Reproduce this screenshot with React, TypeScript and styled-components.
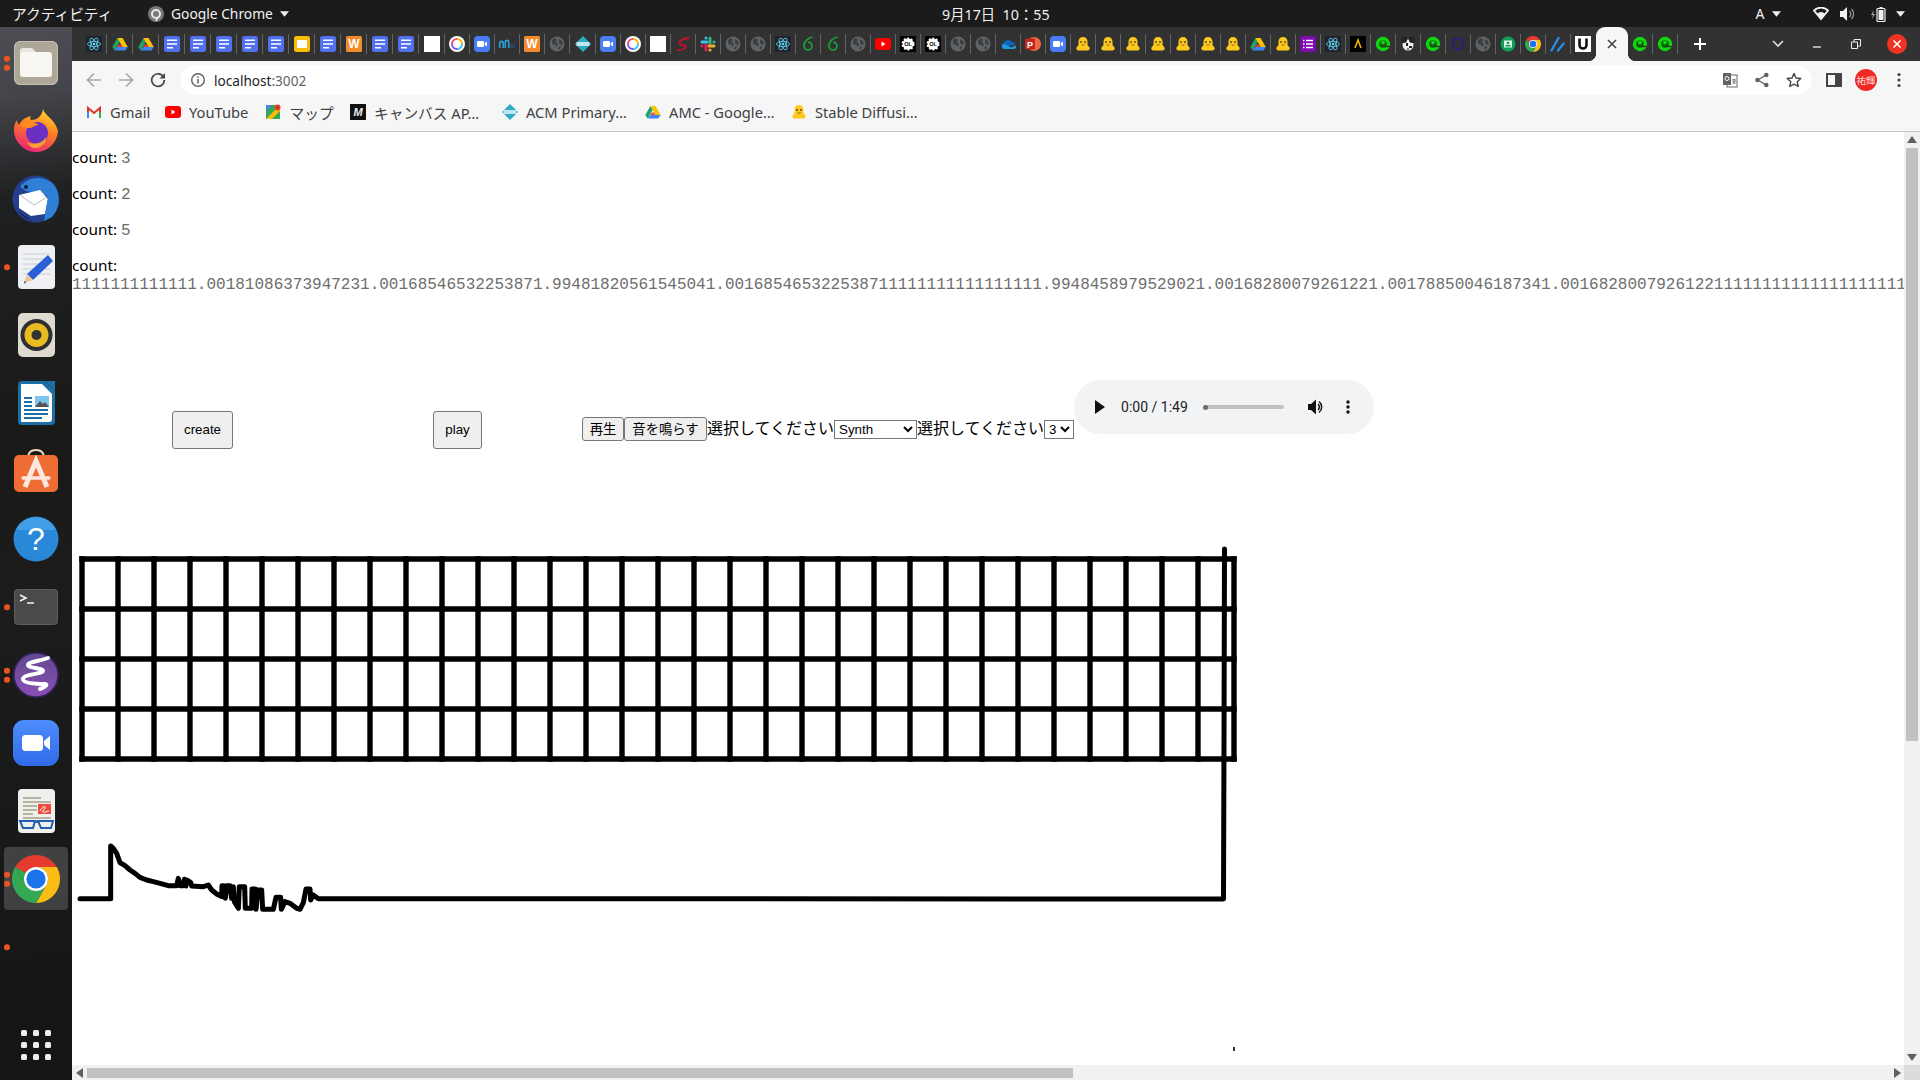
import React from "react";
import styled, { createGlobalStyle } from "styled-components";

const Global = createGlobalStyle`
  html, body { margin: 0; padding: 0; width: 1920px; height: 1080px; overflow: hidden; background: #1a1a1a; }
  #root { width: 1920px; height: 1080px; }
`;

const UI = `"Noto Sans", "Noto Sans CJK JP", sans-serif`;

const Screen = styled.div`
  width: 1920px; height: 1080px; display: flex; flex-direction: column; font-family: ${UI};
`;
const TopBar = styled.header`
  height: 27px; flex: none; background: #1b1b1b; color: #f1f1f1; display: flex; align-items: center; font-size: 14px;
`;
const Activities = styled.span`
  width: 148px; padding-left: 12px; box-sizing: border-box; font-size: 14.7px; letter-spacing: 0;
`;
const AppMenu = styled.div`
  width: 794px; display: flex; align-items: center; gap: 7px; box-sizing: border-box; font-size: 13.8px;
`;
const Clock = styled.time`
  width: 808px; font-size: 14.3px; white-space: pre;
`;
const Slot = styled.span<{ $w: number; $ml?: number }>`
  width: ${(p) => p.$w}px; margin-left: ${(p) => p.$ml ?? 0}px; flex: none; display: inline-flex; align-items: center; justify-content: center;
`;
const Body = styled.div`
  flex: 1; display: flex; min-height: 0;
`;
const Dock = styled.nav`
  width: 72px; flex: none; display: flex; flex-direction: column; box-sizing: border-box; padding-top: 2px; padding-bottom: 20px;
  background: linear-gradient(172deg, #4d4e54 0, #44454a 70px, #1f2021 170px, #191a18 420px, #1b1c1b 560px, #141515 1053px);
`;
const DockSlot = styled.div<{ $active?: boolean }>`
  height: 68px; flex: none; position: relative; display: flex; align-items: center; justify-content: center;
  &::before {
    content: ""; position: absolute; left: 4px; top: 2px; width: 64px; height: 63px; border-radius: 4px;
    background: ${(p) => (p.$active ? "rgba(255,255,255,.18)" : "transparent")};
  }
  svg { position: relative; }
`;
const DockDots = styled.div`
  position: absolute; left: 4px; top: 50%; transform: translateY(-50%); display: flex; flex-direction: column; gap: 3.5px;
`;
const Dot = styled.i`
  display: block; width: 5.5px; height: 5.5px; border-radius: 50%; background: #e95420;
`;
const AppGrid = styled.div`
  margin-top: auto; margin-left: 21px; display: grid; grid-template-columns: repeat(3, 6px); gap: 6px;
  i { display: block; width: 6px; height: 6px; border-radius: 1.5px; background: #eeeeee; }
`;
const Browser = styled.div`
  flex: 1; min-width: 0; display: flex; flex-direction: column;
`;
const TabStrip = styled.div`
  height: 34px; flex: none; background: #323233; display: flex; align-items: center; padding-left: 9px; box-sizing: border-box;
`;
const Tab = styled.div<{ $w: number; $sep: boolean }>`
  width: ${(p) => p.$w}px; height: 20px; flex: none; display: flex; align-items: center; justify-content: center; box-sizing: border-box;
  border-right: 1px solid ${(p) => (p.$sep ? "#626365" : "transparent")};
`;
const ActiveTab = styled.div`
  width: 32px; align-self: stretch; flex: none; background: #f6f6f6; border-radius: 9px 9px 0 0; position: relative;
  display: flex; align-items: center; justify-content: center;
  &::before, &::after { content: ""; position: absolute; bottom: 0; width: 8px; height: 8px; }
  &::before { left: -8px; background: radial-gradient(circle at 0 0, transparent 8px, #f6f6f6 8.5px); }
  &::after { right: -8px; background: radial-gradient(circle at 100% 0, transparent 8px, #f6f6f6 8.5px); }
`;
const Toolbar = styled.div`
  height: 36px; flex: none; box-sizing: border-box; background: #f6f6f6; padding: 4px 0 2px 6px; display: flex; align-items: center;
`;
const Omnibox = styled.div`
  width: 1632px; height: 30px; margin-left: 6px; flex: none; background: #fff; border-radius: 15px; display: flex; align-items: center;
  padding: 0 2px 0 10px; box-sizing: border-box;
`;
const Url = styled.span`
  margin-left: 8px; font-size: 13.6px; color: #202124; flex: 1;
  em { font-style: normal; color: #5f6368; }
`;
const Avatar = styled.span`
  width: 22px; height: 22px; border-radius: 50%; background: #f02a23; color: #ffd9d6; font-size: 9.5px; display: flex; align-items: center; justify-content: center; white-space: nowrap;
`;
const Bookmarks = styled.div`
  height: 35px; flex: none; box-sizing: border-box; background: #f6f6f6; border-bottom: 1px solid #c4c4c4; padding: 0 0 4px 14px; display: flex; align-items: center;
`;
const Bookmark = styled.div<{ $w: number }>`
  width: ${(p) => p.$w}px; flex: none; display: flex; align-items: center; gap: 8px; font-size: 14.7px; color: #3f4144; white-space: nowrap;
`;
const Viewport = styled.div`
  flex: 1; min-height: 0; display: flex; flex-direction: column; background: #fff;
`;
const ViewRow = styled.div`
  flex: 1; min-height: 0; display: flex;
`;
const Page = styled.main`
  flex: 1; min-width: 0; overflow: hidden; color: #000;
`;
const CountLine = styled.p`
  margin: 16px 0; height: 20px; font-size: 15.3px; line-height: 20px; white-space: nowrap; font-family: ${UI};
  &:first-child { margin-top: 15px; }
`;
const LastCount = styled(CountLine)`
  margin-bottom: 0;
`;
const Value = styled.span`
  font-family: "Liberation Mono", monospace; font-size: 16px; color: #6e6e6e;
`;
const LongValue = styled(Value)`
  display: block; white-space: nowrap; line-height: 20px;
`;
const Controls = styled.div`
  margin-top: 85px; height: 70px; white-space: nowrap; font-family: "Liberation Sans", "Noto Sans CJK JP", sans-serif; font-size: 16px;
`;
const Btn = styled.button<{ $w: number; $big?: boolean }>`
  width: ${(p) => p.$w}px;
  font-family: "Liberation Sans", "Noto Sans CJK JP", sans-serif; font-size: 13.333px; color: #000; background: #efefef;
  border: 1px solid #767676; border-radius: 3px; box-sizing: border-box;
  padding: ${(p) => (p.$big ? "10px 0" : "1px 0")}; margin: ${(p) => (p.$big ? "0 100px" : "0")};
  height: ${(p) => (p.$big ? "38px" : "24px")};
`;
const Picker = styled.select<{ $w: number }>`
  width: ${(p) => p.$w}px; font-family: "Liberation Sans", sans-serif; font-size: 13.333px; color: #000; background: #fff; box-sizing: border-box;
`;
const AudioPill = styled.div`
  display: inline-block; width: 300px; height: 54px; border-radius: 27px; background: #f1f3f4; overflow: hidden; box-sizing: border-box;
`;
const AudioInner = styled.div`
  height: 54px; display: flex; align-items: center; padding-left: 20px;
`;
const AudioTime = styled.span`
  margin-left: 15px; width: 83px; flex: none; font-family: Roboto, "Liberation Sans", sans-serif; font-size: 14px; color: #202124;
`;
const AudioTrack = styled.span`
  width: 80px; height: 4px; flex: none; border-radius: 2px; background: #c0c2c4; position: relative;
  &::before { content: ""; position: absolute; left: -1px; top: -0.5px; width: 5px; height: 5px; border-radius: 50%; background: #6b6d6f; }
`;
const Chart = styled.svg`
  display: block; margin-top: 90px;
`;
const VBar = styled.div`
  width: 16px; flex: none; background: #f1f1f1; display: flex; flex-direction: column; align-items: center; padding-top: 4px; box-sizing: border-box;
`;
const VThumb = styled.div`
  width: 12px; height: 593px; margin-top: 5px; background: #c1c1c1;
`;
const HBar = styled.div`
  height: 15px; flex: none; background: #f1f1f1; display: flex; align-items: center;
`;
const HThumb = styled.div`
  width: 986px; height: 10px; background: #c1c1c1;
`;
const Corner = styled.div`
  width: 16px; height: 15px; flex: none; background: #dcdcdc;
`;
const ArrowPush = styled.div`
  margin-top: auto; margin-bottom: 4px; display: flex;
`;
const HRightArrow = styled.div`
  margin-left: auto; margin-right: 3px; display: flex;
`;

/* ---------- favicons ---------- */
type Kind = "react"|"drive"|"docs"|"slides"|"word"|"white"|"ring"|"zoom"|"bars"|"globe"|"acm"|"reds"|"slack"|"leaf"|"yt"|"ol"|"cloud"|"ppt"|"hf"|"forms"|"lambda"|"egreen"|"mouse"|"gear"|"room"|"chrome"|"slash"|"u"|"gmail"|"maps"|"miro";

const ChromeMark = ({ s }: { s: number }) => (
  <svg width={s} height={s} viewBox="4 4 40 40">
    <path fill="#e53c2f" d="M6.68 14A20 20 0 0 1 41.32 14H24A10 10 0 0 0 15.34 19Z" />
    <path fill="#fbbc16" d="M24 14H41.32A20 20 0 0 1 24 44L32.66 29A10 10 0 0 0 24 14Z" />
    <path fill="#34a853" d="M6.68 14A20 20 0 0 0 24 44L32.66 29A10 10 0 0 1 15.34 29 Z" />
    <path fill="#34a853" d="M6.68 14L15.34 19 15.34 29Z" />
    <circle cx="24" cy="24" r="10" fill="#fff" />
    <circle cx="24" cy="24" r="8" fill="#1a73e8" />
  </svg>
);

const Fav = ({ k }: { k: Kind }) => {
  const p = { width: 16, height: 16, viewBox: "0 0 16 16" };
  switch (k) {
    case "react":
      return (<svg {...p}><rect width="16" height="16" fill="#20242a" /><g fill="none" stroke="#61dafb" strokeWidth=".8"><ellipse cx="8" cy="8" rx="6.5" ry="2.6" /><ellipse cx="8" cy="8" rx="6.5" ry="2.6" transform="rotate(60 8 8)" /><ellipse cx="8" cy="8" rx="6.5" ry="2.6" transform="rotate(120 8 8)" /></g><circle cx="8" cy="8" r="1.3" fill="#61dafb" /></svg>);
    case "drive":
      return (<svg {...p}><path fill="#1fa463" d="M5.4 2 .3 11l2.4 3.5L8 5.4z" /><path fill="#ffc107" d="M5.4 2h5.2l5.1 9h-5.2z" /><path fill="#4285f4" d="M2.7 14.5h10.6l2.4-3.5H5.2z" /><path fill="#ea4335" d="M5.2 11h5.3l-1.4-2.5H6.6z" opacity=".9" /></svg>);
    case "docs":
      return (<svg {...p}><rect width="16" height="16" rx="2.5" fill="#5170ee" /><path stroke="#fff" strokeWidth="1.5" d="M3 4.2h10M3 8h10M3 11.8h6" /></svg>);
    case "slides":
      return (<svg {...p}><rect width="16" height="16" rx="2.5" fill="#fbbc04" /><rect x="3" y="4" width="10" height="8" fill="#fff" /></svg>);
    case "word":
      return (<svg {...p}><rect width="16" height="16" rx="1.5" fill="#f48b2c" /><text x="8" y="12.3" textAnchor="middle" fontFamily="Liberation Sans" fontWeight="700" fontSize="12" fill="#fff">W</text></svg>);
    case "white":
      return (<svg {...p}><rect width="16" height="16" fill="#fff" /></svg>);
    case "ring":
      return (<svg {...p}><circle cx="8" cy="8" r="8" fill="#fff" /><g fill="none" strokeWidth="2"><path stroke="#f7b500" d="M8 3a5 5 0 0 1 5 5" /><path stroke="#35c1f1" d="M13 8a5 5 0 0 1-5 5" /><path stroke="#8a4de8" d="M8 13a5 5 0 0 1-5-5" /><path stroke="#e84d8a" d="M3 8a5 5 0 0 1 5-5" /></g></svg>);
    case "zoom":
      return (<svg {...p}><rect width="16" height="16" rx="4" fill="#4a7cf6" /><rect x="3" y="5" width="7" height="6" rx="1.2" fill="#fff" /><path fill="#fff" d="M10.6 7.3 13 5.5v5l-2.4-1.8z" /></svg>);
    case "bars":
      return (<svg {...p}><path fill="#2b9fd8" d="M0 12V7a2.5 2.5 0 0 1 5 0v5H3.5V7.5a1 1 0 0 0-2 0V12z" /><path fill="#2b9fd8" d="M5.5 12V6a2.5 2.5 0 0 1 5 0v6H9V6.5a1 1 0 0 0-2 0V12z" /><path fill="#24475a" d="M11 12V8h5v4z" /></svg>);
    case "globe":
      return (<svg {...p}><circle cx="8" cy="8" r="7.5" fill="#5f6368" /><path fill="#3c3e42" d="M3 4l3-2 2 2-1 2 2 2-1 3-2-2-3-1zM10 3l3 2 1 3-2 1-2-2zM9 12l2-2 1 1-1 3z" /></svg>);
    case "acm":
      return (<svg {...p}><path fill="#2fa9c4" d="M8 0l8 8-8 8-8-8z" /><rect x="1.5" y="6" width="13" height="4" fill="#bfe6ee" /></svg>);
    case "reds":
      return (<svg {...p}><path fill="none" stroke="#c8102e" strokeWidth="1.8" d="M14 2C9 2 3 5 5 8s7 0 6 2.5S6 14 2 14" /></svg>);
    case "slack":
      return (<svg {...p}><g strokeWidth="3" strokeLinecap="round"><path stroke="#36c5f0" d="M2 6h5M6 2v.1" /><path stroke="#2eb67d" d="M10 2v5M14 6h-.1" /><path stroke="#ecb22e" d="M14 10H9M10 14v-.1" /><path stroke="#e01e5a" d="M6 14V9M2 10h.1" /></g></svg>);
    case "leaf":
      return (<svg {...p}><path fill="none" stroke="#13a538" strokeWidth="1.7" d="M12.5 1C8 2 4 5.5 4 10a4 4 0 0 0 8 0c0-2.500-2-4-4-3.500" /></svg>);
    case "yt":
      return (<svg {...p}><rect y="2" width="16" height="12" rx="3" fill="#ff0000" /><path fill="#fff" d="M6.500 5.500 10.500 8l-4 2.500z" /></svg>);
    case "ol":
      return (<svg {...p}><rect width="16" height="16" fill="#000" /><circle cx="8" cy="8" r="5.500" fill="#fff" stroke="#fff" strokeWidth="2" strokeDasharray="2 1.500" /><text x="8" y="10" textAnchor="middle" fontSize="5.500" fontWeight="700" fontFamily="Liberation Sans" fill="#000">OL</text></svg>);
    case "cloud":
      return (<svg {...p}><path fill="#0a66c2" d="M6.500 4.500a4 4 0 0 1 5 1.500 3 3 0 0 1 3.500 3L8 10 3.800 7.500a3 3 0 0 1 2.700-3z" /><path fill="#1e9be8" d="M3.800 7.500 11 11.500l5-2a2.500 2.500 0 0 1-2.500 3.500H3.500a3 3 0 0 1 .3-5.500z" /></svg>);
    case "ppt":
      return (<svg {...p}><circle cx="9" cy="8" r="7" fill="#ea6a4a" /><rect y="2.500" width="10" height="11" rx="1" fill="#c4261d" /><text x="5" y="11.500" textAnchor="middle" fontSize="9" fontWeight="700" fontFamily="Liberation Sans" fill="#fff">P</text></svg>);
    case "hf":
      return (<svg {...p}><path fill="#ffc81e" d="M8 1c3 0 4.500 2 4.500 5v3l2 2.500c.8 1.500-.5 3-2 3H3.500c-1.500 0-2.800-1.500-2-3l2-2.500V6c0-3 1.500-5 4.500-5z" /><circle cx="6" cy="6" r=".9" fill="#4a3b12" /><circle cx="10" cy="6" r=".9" fill="#4a3b12" /><path d="M6.500 8.500c1 1 2 1 3 0" stroke="#4a3b12" strokeWidth=".7" fill="none" /></svg>);
    case "forms":
      return (<svg {...p}><rect width="16" height="16" fill="#7a0dac" /><path stroke="#fff" strokeWidth="1.500" d="M3 4.500h1.500M6 4.500h7M3 8h1.500M6 8h7M3 11.500h1.500M6 11.500h7" /></svg>);
    case "lambda":
      return (<svg {...p}><rect width="16" height="16" fill="#000" /><path fill="none" stroke="#f0b400" strokeWidth="1.600" d="M5 12 8 4l3 8" /></svg>);
    case "egreen":
      return (<svg {...p}><circle cx="8" cy="8" r="5.500" fill="#0c5c0c" stroke="#0fd60f" strokeWidth="3.400" /><circle cx="8" cy="6.500" r="2" fill="#0fd60f" /><path stroke="#323233" strokeWidth="1.400" fill="none" d="M9.500 10.500h6.500" /></svg>);
    case "mouse":
      return (<svg {...p}><circle cx="8" cy="9" r="5.500" fill="#f0f0f0" /><circle cx="4" cy="4" r="3" fill="#222" /><circle cx="12" cy="4" r="3" fill="#222" /><path fill="#222" d="M6 7h2v3H6zM9 10h3v2H9z" /><circle cx="8" cy="13" r="1" fill="#a33" /></svg>);
    case "gear":
      return (<svg {...p}><circle cx="8" cy="8" r="5.500" fill="none" stroke="#2a1a82" strokeWidth="2.500" strokeDasharray="3 1" /></svg>);
    case "room":
      return (<svg {...p}><circle cx="8" cy="8" r="7.500" fill="#0f9d58" /><rect x="4" y="4.500" width="8" height="7" fill="#dff3e8" /><circle cx="8" cy="7" r="1.300" fill="#0f9d58" /><rect x="5.500" y="9" width="5" height="1.500" fill="#0f9d58" /></svg>);
    case "chrome":
      return <ChromeMark s={16} />;
    case "slash":
      return (<svg {...p}><path stroke="#2a8ae0" strokeWidth="2.400" strokeLinecap="round" d="M1.500 14.500 8.500 2M8 14.500l5.500-7" /></svg>);
    case "u":
      return (<svg {...p}><rect width="16" height="16" fill="#fff" /><path fill="none" stroke="#111" strokeWidth="2.600" d="M4.500 2.500V9a3.500 3.500 0 0 0 7 0V2.500" /></svg>);
    case "gmail":
      return (<svg {...p}><path fill="none" stroke="#e0352b" strokeWidth="2" d="M2 14V4l6 5 6-5v10" /><path stroke="#4285f4" strokeWidth="2" d="M2 8v6" /><path stroke="#34a853" strokeWidth="2" d="M14 8v6" /></svg>);
    case "maps":
      return (<svg {...p}><rect y="1" width="14" height="14" fill="#34a853" /><path fill="#fbbc04" d="M0 15 14 1v6L6 15z" /><path fill="#4285f4" d="M0 1h6L0 7z" /><circle cx="11.500" cy="3.500" r="3" fill="#ea4335" /><circle cx="11.500" cy="3.500" r="1" fill="#8c1a13" /></svg>);
    case "miro":
      return (<svg {...p}><rect width="16" height="16" fill="#111" /><text x="8" y="12" textAnchor="middle" fontSize="11" fontStyle="italic" fontWeight="700" fontFamily="Liberation Sans" fill="#eee">M</text></svg>);
  }
};

const tabKinds: Kind[] = ["react","drive","drive","docs","docs","docs","docs","docs","slides","docs","word","docs","docs","white","ring","zoom","bars","word","globe","acm","zoom","ring","white","reds","slack","globe","globe","react","leaf","leaf","globe","yt","ol","ol","globe","globe","cloud","ppt","zoom","hf","hf","hf","hf","hf","hf","hf","drive","hf","forms","react","lambda","egreen","mouse","egreen","gear","globe","room","chrome","slash","u"];

const tabWidth = (i: number) => (i < 14 ? 26 : i < 23 ? 25.1 : 25);

/* ---------- dock icons ---------- */
const DFiles = () => (
  <svg width="44" height="44" viewBox="0 0 44 44"><rect width="44" height="44" rx="6" fill="#aca797" /><rect x=".5" y=".5" width="43" height="43" rx="6" fill="none" stroke="#c5c0b2" /><path fill="#e9e6df" d="M6 10a3 3 0 0 1 3-3h9l4 4v8H6z" /><rect x="6" y="11" width="32" height="25" rx="3" fill="#f8f7f4" /></svg>
);
const DFirefox = () => (
  <svg width="46" height="46" viewBox="0 0 46 46"><defs><linearGradient id="ff" x1="0.700" y1="0" x2="0.300" y2="1"><stop offset="0" stopColor="#ffd52f" /><stop offset=".45" stopColor="#ff7a1f" /><stop offset="1" stopColor="#e8227c" /></linearGradient></defs><path fill="url(#ff)" d="M30 1c1 6 12 10 15 22a22 22 0 1 1-44-2c0-4 2-8 3-9 0 2 1 4 2 5 2-5 7-8 12-9-1 2-1 3 0 4 5 0 11-3 12-11z" /><circle cx="24" cy="25" r="11" fill="#6b2fc4" /><path fill="#ff8a1f" d="M7 17c6-5 13-4 19 0-5 0-6 3-9 3-4 0-7 0-10-3z" /><path fill="#ffb427" d="M14 34c6 3 15 2 19-5 1 5-4 11-11 11-3 0-6-2-8-6z" opacity=".8" /></svg>
);
const DThunder = () => (
  <svg width="48" height="48" viewBox="0 0 48 48"><circle cx="24" cy="24" r="23.500" fill="#23408f" /><path fill="#2f7fd6" d="M8 12C14 2 32-1 42 10c6 8 7 22-2 32 1-8-1-16-6-22L14 16z" /><path fill="#fff" d="M7 20 28 15l8 9-3 15-14 2L7 33z" /><path fill="none" stroke="#b8b8c4" d="M8 20l14 10 13-8" /><path fill="#1b1b4a" d="M2 28c3 8 8 14 18 18L6 36z" /><path fill="#2f7fd6" d="M36 22l8 6-4 14-8 4z" /><circle cx="14" cy="12" r="2" fill="#123" /></svg>
);
const DGedit = () => (
  <svg width="37" height="44" viewBox="0 0 37 44"><rect width="37" height="44" rx="4" fill="#eef0f3" /><path stroke="#c9ccd1" strokeWidth="1" d="M5 9h27M5 14h27M5 19h27M5 24h27M5 29h27" /><path fill="#2a5fd8" d="M30 10l5 6-20 19-6-6z" /><path fill="#e8c79a" d="M9 29l6 6-9 3z" /><path fill="#333" d="M6 37l2-1-1 3z" /></svg>
);
const DRhythm = () => (
  <svg width="37" height="44" viewBox="0 0 37 44"><rect width="37" height="44" rx="5" fill="#dedad0" /><circle cx="18.500" cy="22" r="16" fill="#2f2f33" /><circle cx="18.500" cy="22" r="12" fill="#e8bb22" /><circle cx="18.500" cy="22" r="5" fill="#333" /></svg>
);
const DWriter = () => (
  <svg width="37" height="44" viewBox="0 0 37 44"><path fill="#1c6fa5" d="M4 0h23l10 10v30a4 4 0 0 1-4 4H4a4 4 0 0 1-4-4V4a4 4 0 0 1 4-4z" /><path fill="#fff" d="M4 3h20l10 10v25a3 3 0 0 1-3 3H4a1 1 0 0 1-1-1V4a1 1 0 0 1 1-1z" /><path fill="#1c6fa5" d="M27 0h10v10z" /><path stroke="#1c6fa5" strokeWidth="2" d="M6 17h8M6 21h8M6 25h8M6 29h24M6 33h24M6 37h18" /><rect x="17" y="15" width="14" height="11" fill="#7fc4ea" /><path fill="#555" d="M17 26l5-6 3 3 2-2 4 5z" /></svg>
);
const DStore = () => (
  <svg width="46" height="46" viewBox="0 0 46 46"><path fill="none" stroke="#f1d9b8" strokeWidth="2" d="M15 10c0-5 3-8 8-8s8 3 8 8" /><rect x="1" y="7" width="44" height="37" rx="5" fill="#ee6d35" /><path fill="none" stroke="#fde8de" strokeWidth="5" d="M12 39 23 13l11 26" /><path stroke="#fde8de" strokeWidth="3.500" strokeLinecap="round" d="M10 30h26" /></svg>
);
const DHelp = () => (
  <svg width="46" height="46" viewBox="0 0 46 46"><circle cx="23" cy="23" r="22.500" fill="#2a88d8" /><path fill="#4ba8ea" d="M3 14a22 22 0 0 1 40 0z" opacity=".7" /><text x="23" y="34" textAnchor="middle" fontSize="32" fontFamily="Liberation Sans" fill="#fff">?</text></svg>
);
const DTerminal = () => (
  <svg width="44" height="36" viewBox="0 0 44 36"><rect width="44" height="36" rx="4" fill="#4a4a4a" /><rect x=".5" y=".5" width="43" height="35" rx="4" fill="none" stroke="#5e5e5e" /><path fill="none" stroke="#f2f2f2" strokeWidth="1.600" d="M6 6l6 3-6 3M13 14h7" /></svg>
);
const DEmacs = () => (
  <svg width="46" height="46" viewBox="0 0 46 46"><defs><linearGradient id="em" x1="0" y1="0" x2="0" y2="1"><stop offset="0" stopColor="#5e4a8f" /><stop offset="1" stopColor="#8c4fb4" /></linearGradient></defs><circle cx="23" cy="23" r="22" fill="url(#em)" stroke="#3a2466" strokeWidth="1.500" /><path fill="none" stroke="#fff" strokeWidth="4" strokeLinecap="round" d="M35 6C27 9 15 10 15 13s15 3 15 6-20 3-20 8 16 5 22 5c3 0 1 3-5 5" /></svg>
);
const DZoom = () => (
  <svg width="46" height="46" viewBox="0 0 46 46"><defs><linearGradient id="zm" x1="0" y1="0" x2="0" y2="1"><stop offset="0" stopColor="#4d8dfb" /><stop offset="1" stopColor="#2f6be8" /></linearGradient></defs><rect width="46" height="46" rx="11" fill="url(#zm)" /><rect x="9" y="15" width="21" height="16" rx="3.500" fill="#fff" /><path fill="#fff" d="M31 21l6-5v14l-6-5z" /></svg>
);
const DEvince = () => (
  <svg width="37" height="44" viewBox="0 0 37 44"><rect width="37" height="44" rx="4" fill="#efefec" /><path stroke="#b9b3a2" strokeWidth="2" d="M5 9h18M5 13h28M5 17h14M5 21h14M5 25h10M5 29h28" /><rect x="20" y="15" width="13" height="10" fill="#ee4b3e" /><path d="M22 22c2-4 6-6 5-3s-4 3-2 4 4-1 6-1" stroke="#fff" fill="none" strokeWidth="1" /><g fill="none" stroke="#1f5fb4" strokeWidth="2"><path d="M2 32h15l-2 7H5zM20 32h15l-2 7H23z" /><path d="M17 33h3" /></g></svg>
);

/* ---------- generic icons ---------- */
const Caret = ({ c = "#eee", w = 9 }: { c?: string; w?: number }) => (
  <svg width={w} height="6" viewBox="0 0 10 6"><path fill={c} d="M0 0h10L5 6z" /></svg>
);

/* ---------- waveform ---------- */
const wave: [number, number][] = [[30,236],[122,236],[122,78],[130,85],[140,100],[150,128],[165,137],[180,150],[195,160],[210,172],[230,180],[250,185],[270,190],[295,197],[320,197],[325,175],[330,197],[340,197],[343,178],[348,198],[350,180],[362,187],[365,198],[400,200],[415,195],[425,210],[440,222],[455,230],[456,197],[462,197],[466,235],[470,197],[480,197],[485,235],[490,200],[493,245],[505,265],[508,200],[524,200],[526,265],[545,265],[546,207],[556,207],[558,268],[564,210],[575,210],[578,268],[610,268],[618,232],[632,232],[634,268],[645,245],[660,250],[680,265],[690,268],[700,248],[708,207],[720,207],[722,240],[730,225],[745,236],[900,236]];
const OX = 72, OY = 540;
const mapped = wave.map(([x, y]) => `${70 + x / 3 - OX},${820 + y / 3 - OY}`).join(" ");
const gridX = Array.from({ length: 33 }, (_, i) => 10 + 36 * i);
const gridY = [19, 69, 119, 169, 219];

const LONG = "1111111111111.00181086373947231.00168546532253871.99481820561545041.001685465322538711111111111111111.9948458979529021.00168280079261221.00178850046187341.00168280079261221111111111111111111111111111111111";

const dockItems: { el?: React.ReactNode; dots: number; active?: boolean }[] = [
  { el: <DFiles />, dots: 2 },
  { el: <DFirefox />, dots: 0 },
  { el: <DThunder />, dots: 0 },
  { el: <DGedit />, dots: 1 },
  { el: <DRhythm />, dots: 0 },
  { el: <DWriter />, dots: 0 },
  { el: <DStore />, dots: 0 },
  { el: <DHelp />, dots: 0 },
  { el: <DTerminal />, dots: 1 },
  { el: <DEmacs />, dots: 2 },
  { el: <DZoom />, dots: 0 },
  { el: <DEvince />, dots: 0 },
  { el: <ChromeMark s={48} />, dots: 2, active: true },
  { dots: 1 },
];

const marks: { k: Kind; t: string; w: number }[] = [
  { k: "gmail", t: "Gmail", w: 79 },
  { k: "yt", t: "YouTube", w: 100.5 },
  { k: "maps", t: "マップ", w: 84.5 },
  { k: "miro", t: "キャンバス AP…", w: 152 },
  { k: "acm", t: "ACM Primary…", w: 143 },
  { k: "drive", t: "AMC - Google…", w: 146 },
  { k: "hf", t: "Stable Diffusi…", w: 140 },
];

export default function App() {
  return (
    <Screen>
      <Global />
      <TopBar>
        <Activities>アクティビティ</Activities>
        <AppMenu>
          <svg width="16" height="16" viewBox="0 0 16 16"><circle cx="8" cy="8" r="8" fill="#77787a" /><circle cx="8" cy="8" r="4" fill="none" stroke="#e8e8e8" strokeWidth="2" /><path stroke="#e8e8e8" strokeWidth="1.500" d="M10 11l-2 4" /></svg>
          <span>Google Chrome</span>
          <Caret />
        </AppMenu>
        <Clock>9月17日  10：55</Clock>
        <Slot $w={20} $ml={0}>A</Slot>
        <Slot $w={12}><Caret /></Slot>
        <Slot $w={20} $ml={29}><svg width="16" height="14" viewBox="0 0 16 14"><path fill="none" stroke="#f2f2f2" strokeWidth="1.800" d="M1 3.500a10 10 0 0 1 14 0L8 12z" /><path fill="#f2f2f2" d="M4 6.500a6 6 0 0 1 8 0L8 12z" /></svg></Slot>
        <Slot $w={20} $ml={7}><svg width="16" height="14" viewBox="0 0 16 14"><path fill="#f2f2f2" d="M0 4h3l4-4v14l-4-4H0z" /><path fill="none" stroke="#999" strokeWidth="1.200" d="M9.500 4a4 4 0 0 1 0 6M11.500 2a7 7 0 0 1 0 10" /></svg></Slot>
        <Slot $w={20} $ml={11}><svg width="16" height="16" viewBox="0 0 16 16"><path fill="#aaa" d="M3 4 0 9h2l-1 4 3-5H2z" /><rect x="6" y="2.500" width="8" height="13" rx="1" fill="none" stroke="#f2f2f2" strokeWidth="1.200" /><rect x="7.500" y="4" width="5" height="10" fill="#f2f2f2" /><rect x="8.500" y="1" width="3" height="1.500" fill="#f2f2f2" /></svg></Slot>
        <Slot $w={12} $ml={5}><Caret /></Slot>
      </TopBar>
      <Body>
        <Dock>
          {dockItems.map((d, i) => (
            <DockSlot key={i} $active={d.active}>
              {d.el}
              {d.dots > 0 && (
                <DockDots>
                  {Array.from({ length: d.dots }, (_, j) => <Dot key={j} />)}
                </DockDots>
              )}
            </DockSlot>
          ))}
          <AppGrid>{Array.from({ length: 9 }, (_, i) => <i key={i} />)}</AppGrid>
        </Dock>
        <Browser>
          <TabStrip>
            {tabKinds.map((k, i) => (
              <Tab key={i} $w={tabWidth(i)} $sep={i !== tabKinds.length - 1}><Fav k={k} /></Tab>
            ))}
            <ActiveTab>
              <svg width="12" height="12" viewBox="0 0 12 12"><path stroke="#444" strokeWidth="1.600" d="M2 2l8 8M10 2l-8 8" /></svg>
            </ActiveTab>
            <Tab $w={25} $sep><Fav k="egreen" /></Tab>
            <Tab $w={25} $sep><Fav k="egreen" /></Tab>
            <Slot $w={44}><svg width="14" height="14" viewBox="0 0 14 14"><path stroke="#fff" strokeWidth="2" d="M7 1v12M1 7h12" /></svg></Slot>
            <Slot $w={24} $ml={44}><svg width="12" height="8" viewBox="0 0 12 8"><path fill="none" stroke="#ddd" strokeWidth="1.600" d="M1 1l5 5 5-5" /></svg></Slot>
            <Slot $w={40} $ml={7}><svg width="10" height="10" viewBox="0 0 10 10"><path stroke="#eee" strokeWidth="1.300" d="M1 8h8" /></svg></Slot>
            <Slot $w={39}><svg width="10" height="10" viewBox="0 0 10 10"><path fill="none" stroke="#eee" d="M.5 3h6v6.500h-6zM3 3V.5h6.500v6.500H7" /></svg></Slot>
            <Slot $w={42}><svg width="20" height="20" viewBox="0 0 20 20"><circle cx="10" cy="10" r="10" fill="#ee3424" /><path stroke="#fff" strokeWidth="1.600" d="M6.500 6.500l7 7M13.500 6.500l-7 7" /></svg></Slot>
          </TabStrip>
          <Toolbar>
            <Slot $w={32}><svg width="16" height="16" viewBox="0 0 16 16"><path fill="none" stroke="#a8a8a8" strokeWidth="1.700" d="M15 8H2M8 1.500 1.500 8 8 14.500" /></svg></Slot>
            <Slot $w={32}><svg width="16" height="16" viewBox="0 0 16 16"><path fill="none" stroke="#a8a8a8" strokeWidth="1.700" d="M1 8h13M8 1.500 14.500 8 8 14.500" /></svg></Slot>
            <Slot $w={32}><svg width="16" height="16" viewBox="0 0 16 16"><path fill="none" stroke="#444" strokeWidth="1.700" d="M13.500 5A6.300 6.300 0 1 0 14.300 8" /><path fill="#444" d="M15 1v5.500H9.500z" /></svg></Slot>
            <Omnibox>
              <svg width="16" height="16" viewBox="0 0 16 16"><circle cx="8" cy="8" r="6.300" fill="none" stroke="#5f6368" strokeWidth="1.400" /><path stroke="#5f6368" strokeWidth="1.500" d="M8 7v4.500M8 4.300v1.500" /></svg>
              <Url>localhost<em>:3002</em></Url>
              <Slot $w={32}><svg width="16" height="16" viewBox="0 0 16 16"><rect x="5" y="3" width="10" height="12" fill="#fff" stroke="#666" /><path fill="#5f6368" d="M1 1h8v12H1z" /><circle cx="5" cy="6.500" r="2" fill="none" stroke="#fff" /><path stroke="#666" fill="none" d="M10 8h4M12 7v1M10.500 12l3-3M11 9l2.500 3" /></svg></Slot>
              <Slot $w={32}><svg width="16" height="16" viewBox="0 0 16 16"><path fill="none" stroke="#5f6368" strokeWidth="1.400" d="M12 3 4 8l8 5" /><circle cx="12.300" cy="3" r="2.300" fill="#5f6368" /><circle cx="3.500" cy="8" r="2.300" fill="#5f6368" /><circle cx="12.300" cy="13" r="2.300" fill="#5f6368" /></svg></Slot>
              <Slot $w={32}><svg width="16" height="16" viewBox="0 0 16 16"><path fill="none" stroke="#444" strokeWidth="1.400" strokeLinejoin="round" d="M8 1.500l2 4.500 4.800.5-3.600 3.200 1 4.800L8 12.100l-4.200 2.400 1-4.800L1.200 6.500 6 6z" /></svg></Slot>
            </Omnibox>
            <Slot $w={32} $ml={6}><svg width="16" height="16" viewBox="0 0 16 16"><rect x="1" y="2" width="14" height="12" fill="none" stroke="#444" strokeWidth="2" /><rect x="9" y="2" width="6" height="12" fill="#444" /></svg></Slot>
            <Slot $w={32}><Avatar>祐輝</Avatar></Slot>
            <Slot $w={34}><svg width="4" height="16" viewBox="0 0 4 16"><circle cx="2" cy="2.500" r="1.600" fill="#444" /><circle cx="2" cy="8" r="1.600" fill="#444" /><circle cx="2" cy="13.500" r="1.600" fill="#444" /></svg></Slot>
          </Toolbar>
          <Bookmarks>
            {marks.map((m) => (
              <Bookmark key={m.t} $w={m.w}><Fav k={m.k} /><span>{m.t}</span></Bookmark>
            ))}
          </Bookmarks>
          <Viewport>
            <ViewRow>
              <Page>
                <CountLine>count: <Value>3</Value></CountLine>
                <CountLine>count: <Value>2</Value></CountLine>
                <CountLine>count: <Value>5</Value></CountLine>
                <LastCount>count:</LastCount>
                <LongValue>{LONG}</LongValue>
                <Controls>
                  <Btn $w={61} $big>create</Btn><Btn $w={49} $big>play</Btn><Btn $w={42}>再生</Btn><Btn $w={83}>音を鳴らす</Btn>選択してください<Picker $w={83} defaultValue="Synth"><option>Synth</option><option>MembraneSynth</option></Picker>選択してください<Picker $w={30} defaultValue="3"><option>3</option></Picker>
                  <AudioPill>
                    <AudioInner>
                      <svg width="12" height="14" viewBox="0 0 12 14"><path fill="#111" d="M1 0l10 7-10 7z" /></svg>
                      <AudioTime>0:00 / 1:49</AudioTime>
                      <AudioTrack />
                      <Slot $w={24} $ml={20}><svg width="16" height="16" viewBox="0 0 16 16"><path fill="#111" d="M0 5h3l5-4.500v15L3 11H0z" /><path fill="none" stroke="#111" strokeWidth="1.500" d="M10 5a4 4 0 0 1 0 6M11 2.500a7 7 0 0 1 0 11" /></svg></Slot>
                      <Slot $w={16} $ml={12}><svg width="4" height="14" viewBox="0 0 4 14"><circle cx="2" cy="2" r="1.700" fill="#111" /><circle cx="2" cy="7" r="1.700" fill="#111" /><circle cx="2" cy="12" r="1.700" fill="#111" /></svg></Slot>
                    </AudioInner>
                  </AudioPill>
                </Controls>
                <Chart width="1240" height="520" viewBox="0 0 1240 520" fill="none" stroke="#000" strokeWidth="5.4">
                  {gridX.map((x) => <line key={x} x1={x} x2={x} y1={19} y2={219} strokeLinecap="square" />)}
                  {gridY.map((y) => <line key={y} x1={10} x2={1162} y1={y} y2={y} strokeLinecap="square" />)}
                  <polyline points={mapped + " 1151.500,359 1152,200 1152.500,9"} strokeLinejoin="round" strokeLinecap="round" strokeWidth="5" />
                  <line x1={1162} x2={1162} y1={507} y2={511} strokeWidth="2" stroke="#333" />
                </Chart>
              </Page>
              <VBar>
                <svg width="10" height="7" viewBox="0 0 10 7"><path fill="#606060" d="M5 0l5 7H0z" /></svg>
                <VThumb />
                <ArrowPush><svg width="10" height="7" viewBox="0 0 10 7"><path fill="#606060" d="M5 7 10 0H0z" /></svg></ArrowPush>
              </VBar>
            </ViewRow>
            <HBar>
              <Slot $w={15}><svg width="7" height="10" viewBox="0 0 7 10"><path fill="#606060" d="M0 5l7-5v10z" /></svg></Slot>
              <HThumb />
              <HRightArrow><svg width="7" height="10" viewBox="0 0 7 10"><path fill="#606060" d="M7 5 0 0v10z" /></svg></HRightArrow>
              <Corner />
            </HBar>
          </Viewport>
        </Browser>
      </Body>
    </Screen>
  );
}
